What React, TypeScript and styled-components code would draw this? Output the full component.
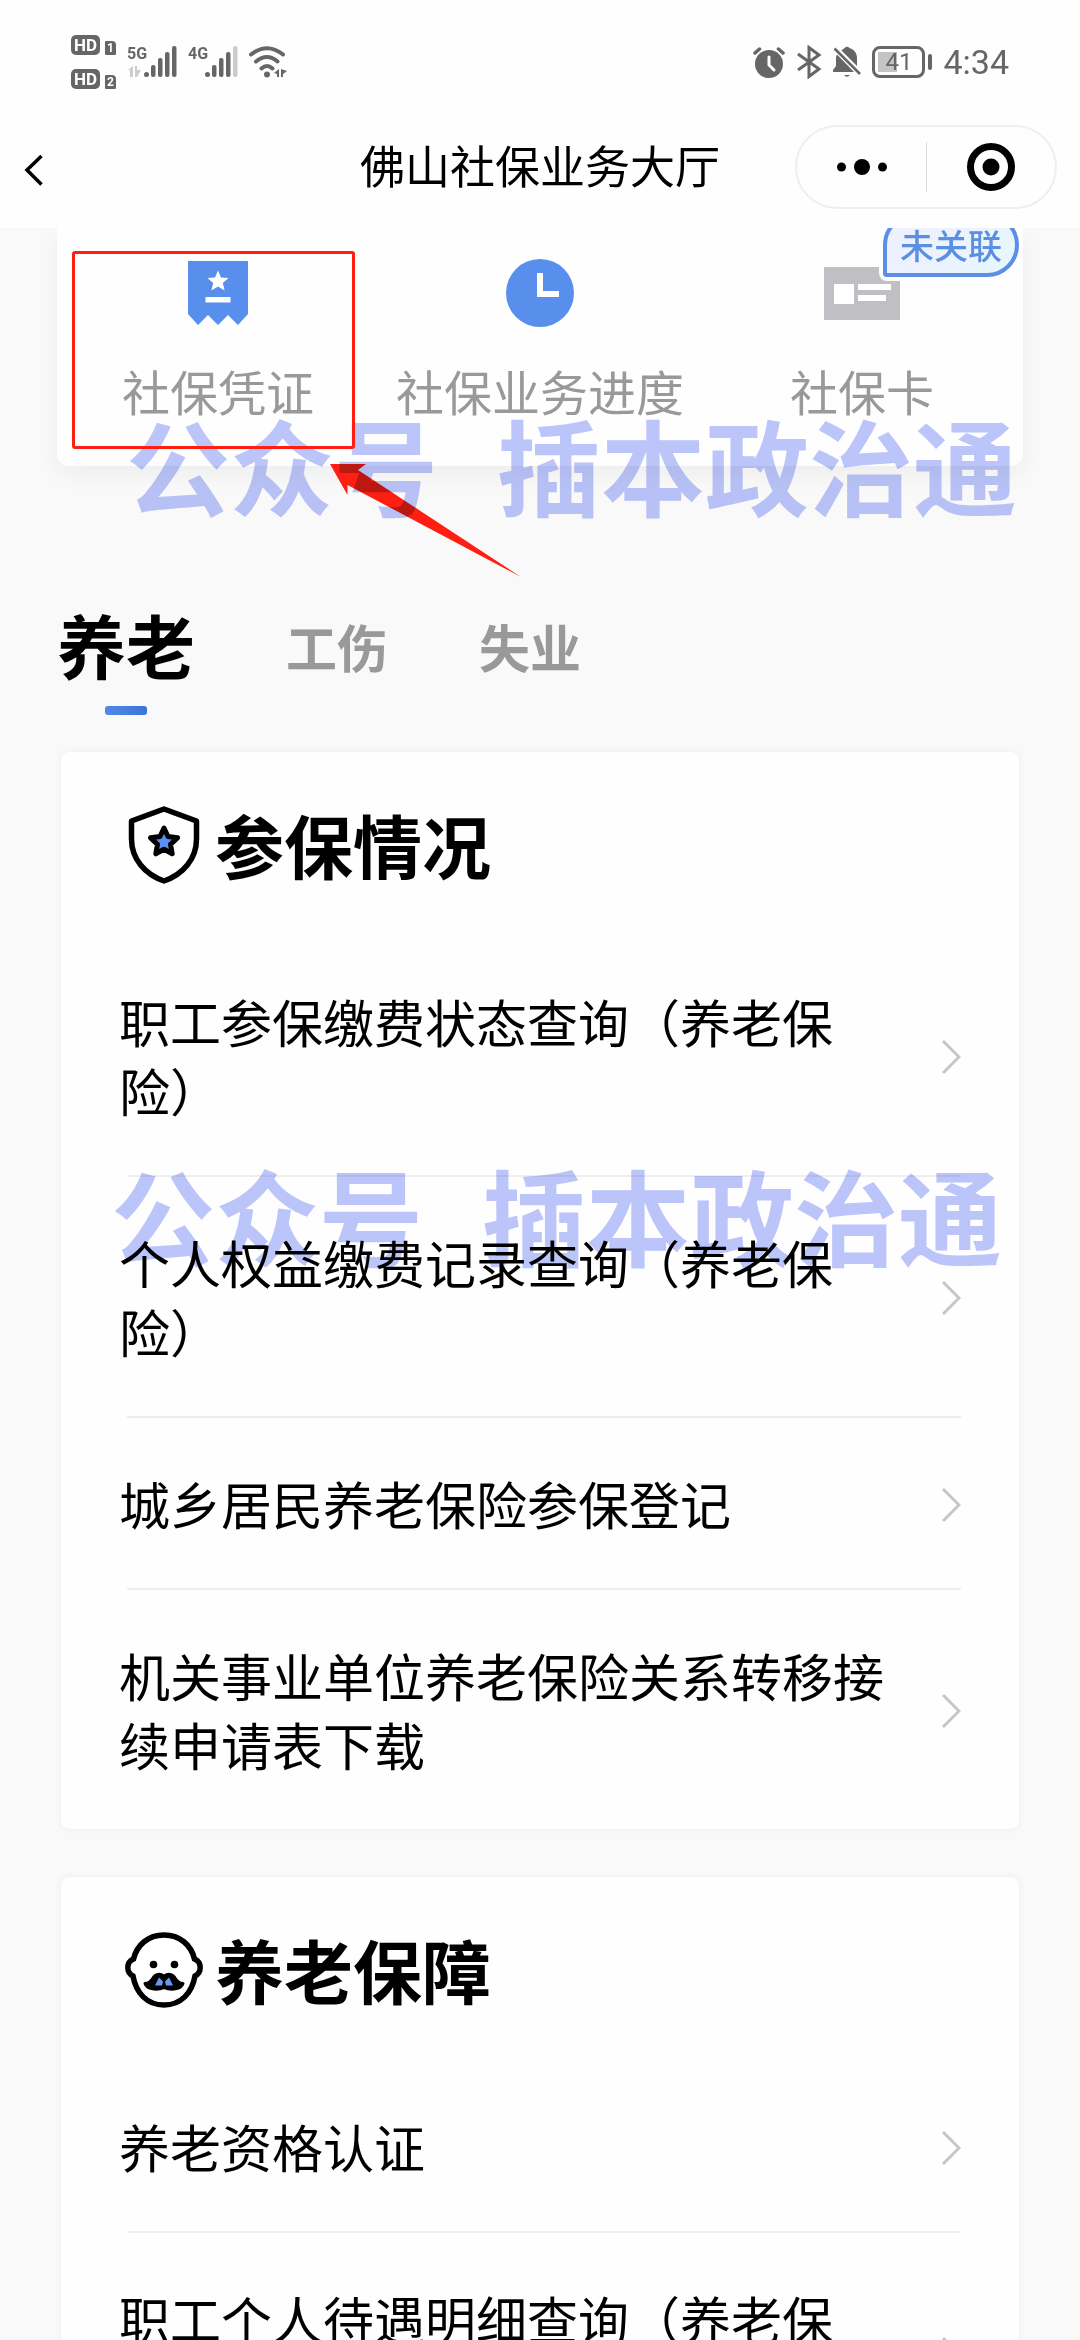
import React from "react";
import styled, { createGlobalStyle } from "styled-components";

const GlobalStyle = createGlobalStyle`
  * { box-sizing: border-box; }
  body {
    margin: 0;
    background: #f9f9f9;
    font-family: Roboto, "Noto Sans CJK SC", sans-serif;
    color: #000;
  }
  button {
    border: 0;
    padding: 0;
    background: none;
    font: inherit;
    color: inherit;
  }
  svg { display: block; flex: none; }
`;

const Screen = styled.div`
  position: relative;
  display: flex;
  flex-direction: column;
  height: 100vh;
  overflow: hidden;
`;

const Header = styled.header`
  flex: none;
  background: #fefefe;
`;

const StatusBar = styled.div`
  display: flex;
  align-items: center;
  justify-content: space-between;
  height: 106px;
  padding: 17px 71px 0;
  color: #666;
`;

const StatusGroup = styled.div<{ $gap: number }>`
  display: flex;
  align-items: center;
  gap: ${(p) => p.$gap}px;
`;

const SimList = styled.div`
  display: grid;
  gap: 14px;
`;

const SimBadge = styled.div`
  display: flex;
  align-items: flex-end;
  gap: 5px;
`;

const HdTag = styled.span`
  width: 29px;
  height: 20px;
  border-radius: 5px;
  background: #666;
  color: #fff;
  font-size: 17px;
  font-weight: 700;
  line-height: 20px;
  text-align: center;
`;

const SimNumber = styled.span`
  width: 11px;
  height: 14px;
  border-radius: 1px 4px 1px 1px;
  background: #666;
  color: #fff;
  font-size: 12px;
  font-weight: 700;
  line-height: 14px;
  text-align: center;
`;

const Signal = styled.div`
  display: flex;
  height: 32px;
`;

const SignalLabel = styled.span`
  width: 17px;
  font-size: 16px;
  font-weight: 700;
  line-height: 16px;
  white-space: nowrap;
`;

const Battery = styled.div`
  display: flex;
  align-items: center;
  gap: 3px;
  &::after {
    content: "";
    width: 4px;
    height: 16px;
    border-radius: 2px;
    background: #666;
  }
`;

const BatteryBody = styled.span`
  width: 53px;
  height: 32px;
  border: 3px solid #666;
  border-radius: 8px;
  padding: 3px;
  background: linear-gradient(#c4c4c4, #c4c4c4) 3px 3px / 19px 20px no-repeat;
  font-size: 24px;
  line-height: 20px;
  text-align: center;
`;

const Clock = styled.time`
  font-size: 34px;
  line-height: 32px;
`;

const NavBar = styled.div`
  display: grid;
  grid-template-columns: 1fr auto 1fr;
  align-items: center;
  height: 122px;
  padding: 0 23px;
`;

const BackButton = styled.button`
  justify-self: start;
  padding-top: 5px;
`;

const NavTitle = styled.h1`
  margin: 0;
  padding-top: 4px;
  font-size: 45px;
  font-weight: 400;
  line-height: 60px;
`;

const Capsule = styled.div`
  justify-self: end;
  display: grid;
  grid-template-columns: 1fr 1fr;
  align-items: center;
  width: 262px;
  height: 84px;
  border: 2px solid #efefef;
  border-radius: 42px;
`;

const CapsuleButton = styled.button`
  display: grid;
  place-items: center;
  height: 50px;
  & + & { border-left: 1px solid #ddd; }
`;

const Content = styled.main`
  flex: 1;
  min-height: 0;
  overflow: hidden;
  background: #f9f9f9;
`;

const QuickCard = styled.section`
  display: grid;
  grid-template-columns: repeat(3, 1fr);
  height: 238px;
  margin: 0 57px;
  border-radius: 0 0 12px 12px;
  background: #fefefe;
  box-shadow: 0 8px 24px rgba(0, 0, 0, 0.05);
`;

const QuickItem = styled.button`
  position: relative;
  display: flex;
  flex-direction: column;
  align-items: center;
  padding-top: 31px;
`;

const QuickIcon = styled.span`
  display: grid;
  place-items: center;
  height: 68px;
`;

const QuickLabel = styled.span`
  margin-top: 36px;
  font-size: 48px;
  line-height: 64px;
  color: #999;
  white-space: nowrap;
`;

const LinkBadge = styled.span`
  position: absolute;
  top: -15px;
  right: 4px;
  width: 136px;
  height: 64px;
  border: 4px solid #5b8fe6;
  border-radius: 32px 32px 32px 4px;
  background: linear-gradient(135deg, #f0effd, #e6f7fd);
  box-shadow: 0 0 0 4px #fefefe;
  color: #5b8fe0;
  font-size: 34px;
  font-weight: 500;
  line-height: 60px;
  text-align: center;
`;

const Tabs = styled.nav`
  display: flex;
  align-items: center;
  gap: 91px;
  height: 138px;
  margin: 112px 57px 36px;
`;

const Tab = styled.button<{ $active?: boolean }>`
  position: relative;
  height: 138px;
  padding-top: 7px;
  font-size: ${(p) => (p.$active ? 69 : 51)}px;
  font-weight: 700;
  line-height: 131px;
  color: ${(p) => (p.$active ? "#000" : "#999")};
  &::after {
    content: "";
    display: ${(p) => (p.$active ? "block" : "none")};
    position: absolute;
    bottom: 1px;
    left: calc(50% - 21px);
    width: 42px;
    height: 9px;
    border-radius: 3px;
    background: linear-gradient(90deg, #5289e6, #3b74d8);
  }
`;

const Card = styled.section`
  margin: 0 61px 48px;
  border-radius: 8px;
  background: #fefefe;
  box-shadow: 0 0 6px rgba(0, 0, 0, 0.06);
`;

const CardHeader = styled.header`
  display: flex;
  align-items: center;
  gap: 10px;
  height: 184px;
  padding: 14px 62px 0;
`;

const CardIcon = styled.span`
  display: grid;
  place-items: center;
  width: 82px;
  height: 80px;
  margin-bottom: 12px;
`;

const CardTitle = styled.h2`
  margin: 0;
  font-size: 69px;
  font-weight: 700;
  line-height: 96px;
`;

const RowList = styled.ul`
  margin: 0;
  padding: 0;
  list-style: none;
`;

const RowItem = styled.li`
  & + &::before {
    content: "";
    display: block;
    height: 2px;
    margin: 0 58px 0 66px;
    background: #eee;
  }
`;

const RowLink = styled.a`
  display: flex;
  align-items: center;
  justify-content: space-between;
  gap: 36px;
  padding: 49px 58px 46px;
  color: inherit;
  text-decoration: none;
`;

const RowText = styled.span`
  flex: 1;
  padding-top: 6px;
  font-size: 51px;
  line-height: 69px;
`;

const Watermark = styled.div<{ $top: number; $left: number }>`
  position: absolute;
  top: ${(p) => p.$top}px;
  left: ${(p) => p.$left}px;
  display: flex;
  gap: 59px;
  font-size: 104px;
  font-weight: 700;
  line-height: 120px;
  white-space: nowrap;
  color: #bcc6fb;
  mix-blend-mode: multiply;
  pointer-events: none;
`;

const Highlight = styled.div`
  position: absolute;
  top: 251px;
  left: 72px;
  width: 283px;
  height: 198px;
  border: 3px solid #ff1e12;
  border-radius: 3px;
  pointer-events: none;
`;

const Pointer = styled.svg`
  position: absolute;
  top: 464px;
  left: 330px;
  pointer-events: none;
`;

const SignalBars = ({ weak }: { weak?: boolean }) => (
  <svg width="33" height="32" viewBox="0 0 33 32" fill="#666">
    <circle cx="2.5" cy="28.5" r="2.5" />
    <rect x="7" y="19" width="4.5" height="12" rx="2" />
    <rect x="14" y="12" width="4.5" height="19" rx="2" />
    <rect x="21" y="6" width="4.5" height="25" rx="2" />
    <rect x="28" y="0" width="4.5" height="31" rx="2" fill={weak ? "#ccc" : "#666"} />
  </svg>
);

const DataArrows = styled.svg`
  position: absolute;
  left: 1px;
  bottom: 1px;
`;

const SignalWithData = styled(Signal)`
  position: relative;
`;

const WifiIcon = () => (
  <svg width="38" height="32" viewBox="0 0 38 32" fill="none" stroke="#666" strokeWidth="4" strokeLinecap="round">
    <path d="M2 8.5Q18 -4 34 8.5M7 15.500Q18 6.500 28.500 15.500M12.500 22.500Q18 17.500 23.500 22.500" />
    <circle cx="18" cy="28.500" r="3" fill="#666" stroke="none" />
    <path d="M25 27l5-4v8h-2v-3zM32 23v8h2v-3l4-3z" fill="#666" stroke="none" />
  </svg>
);

const AlarmIcon = () => (
  <svg width="32" height="32" viewBox="0 0 32 32" fill="none" stroke="#666" strokeWidth="3.500" strokeLinecap="round">
    <circle cx="16" cy="18" r="14" fill="#666" stroke="none" />
    <path d="M2 7l4.500-4M30 7l-4.500-4" />
    <path d="M16 11v8l5 5" stroke="#fff" strokeWidth="3" />
  </svg>
);

const BluetoothIcon = () => (
  <svg width="26" height="34" viewBox="0 0 26 34" fill="none" stroke="#666" strokeWidth="3">
    <path d="M2 9l21 15-10 7.500V2.500L23 10 2 25" />
  </svg>
);

const MuteIcon = () => (
  <svg width="28" height="32" viewBox="0 0 28 32" fill="#666">
    <path d="M4 8.500L21 26H0v-2l3-4v-9zM8.500 4.500C10 3 11 3 11.500 2q2.500-2.500 5 0c5 1.500 7.500 5.500 7.500 10v8z" />
    <path d="M1.500 2.500L27 28" stroke="#666" strokeWidth="2.500" />
    <path d="M11 29h6q-3 3.500-6 0z" />
  </svg>
);

const BackIcon = () => (
  <svg width="22" height="32" viewBox="0 0 22 32" fill="none" stroke="#000" strokeWidth="3.500">
    <path d="M18.500 2L4 16l14.500 14.500" />
  </svg>
);

const MoreIcon = () => (
  <svg width="50" height="16" viewBox="0 0 50 16">
    <circle cx="4.500" cy="8" r="4.500" />
    <circle cx="25" cy="8" r="8" />
    <circle cx="45.500" cy="8" r="4.500" />
  </svg>
);

const CloseIcon = () => (
  <svg width="48" height="48" viewBox="0 0 48 48">
    <circle cx="24" cy="24" r="20.500" fill="none" stroke="#000" strokeWidth="7" />
    <circle cx="24" cy="24" r="8.500" />
  </svg>
);

const VoucherIcon = () => (
  <svg width="60" height="64" viewBox="0 0 60 64">
    <path d="M0 0h60v53l-10 11-10-10-10 10-10-10-10 10L0 53z" fill="#588fec" />
    <path d="M30 9.500l3 7 7.500.6-5.700 5 1.800 7.400-6.600-4-6.600 4 1.800-7.400-5.700-5 7.500-.6z" fill="#fff" />
    <path d="M17.500 36h25v5.500h-25z" fill="#fff" />
  </svg>
);

const ProgressIcon = () => (
  <svg width="68" height="68" viewBox="0 0 68 68">
    <circle cx="34" cy="34" r="34" fill="#588fec" />
    <path d="M34 14v21h19" fill="none" stroke="#fff" strokeWidth="6" />
  </svg>
);

const SocialCardIcon = () => (
  <svg width="76" height="53" viewBox="0 0 76 53">
    <path d="M0 0h76v53H0z" fill="#bfbfc4" />
    <path d="M10 17h20v20H10zM34 17h33v6H34zM34 28h28v6H34z" fill="#fff" />
  </svg>
);

const ShieldIcon = () => (
  <svg width="72" height="78" viewBox="0 0 72 78" fill="none" stroke="#000" strokeWidth="5.500" strokeLinejoin="round">
    <path d="M36 3L68.500 15v18C68.500 53 55 68.500 36 75 17 68.500 3.500 53 3.500 33V15z" />
    <path d="M36 22l4 8.500 9.500 1.300-7 6.500 1.700 9.500L36 43.300l-8.200 4.500 1.700-9.500-7-6.500 9.500-1.300z" fill="#5b8ff0" strokeWidth="5" />
  </svg>
);

const ElderIcon = () => (
  <svg width="78" height="76" viewBox="0 0 78 76">
    <path
      d="M39 3C23 3 12 13 8.500 27 5 28.500 2.800 31.500 2.800 35.500S5 42.500 8 44C11 61 22 73 39 73s28-12 31-29c3-1.500 5.200-4.500 5.200-8.500s-2.200-7-5.700-8.500C66 13 55 3 39 3z"
      fill="#fff"
      stroke="#000"
      strokeWidth="5.500"
    />
    <circle cx="28.500" cy="32.500" r="3.800" />
    <circle cx="49.500" cy="32.500" r="3.800" />
    <path
      d="M39 44.500c3-3.500 9-2.500 11 1.500 2 3.500 4.500 5.500 8 5.500-2 6-12 7-19 4-7 3-17 2-19-4 3.500 0 6-2 8-5.500 2-4 8-5 11-1.500z"
      stroke="#000"
      strokeWidth="3"
      strokeLinejoin="round"
    />
    <path d="M34 45.500l4 4-1 4h-7zM44 45.500l-4 4 1 4h7z" fill="#6a97f5" />
  </svg>
);

const ChevronIcon = () => (
  <svg width="20" height="34" viewBox="0 0 20 34" fill="none" stroke="#c6c6c6" strokeWidth="3">
    <path d="M2 1l16 16L2 33" />
  </svg>
);

const quickItems = [
  { label: "社保凭证", icon: <VoucherIcon /> },
  { label: "社保业务进度", icon: <ProgressIcon /> },
  { label: "社保卡", icon: <SocialCardIcon />, badge: "未关联" },
];

const tabs = ["养老", "工伤", "失业"];

const sections = [
  {
    title: "参保情况",
    icon: <ShieldIcon />,
    rows: [
      "职工参保缴费状态查询（养老保险）",
      "个人权益缴费记录查询（养老保险）",
      "城乡居民养老保险参保登记",
      "机关事业单位养老保险关系转移接续申请表下载",
    ],
  },
  {
    title: "养老保障",
    icon: <ElderIcon />,
    rows: ["养老资格认证", "职工个人待遇明细查询（养老保险）"],
  },
];

const watermarks = [
  { top: 414, left: 126 },
  { top: 1164, left: 111 },
];

export default function App() {
  return (
    <>
      <GlobalStyle />
      <Screen>
        <Header>
          <StatusBar>
            <StatusGroup $gap={11}>
              <SimList>
                {["1", "2"].map((n) => (
                  <SimBadge key={n}>
                    <HdTag>HD</HdTag>
                    <SimNumber>{n}</SimNumber>
                  </SimBadge>
                ))}
              </SimList>
              <SignalWithData>
                <SignalLabel>5G</SignalLabel>
                <SignalBars />
                <DataArrows width="13" height="11" viewBox="0 0 13 11" fill="#ccc">
                  <path d="M0 4l5-4v11H2V4zM7 0h2v4l4 0-4 7H7z" />
                </DataArrows>
              </SignalWithData>
              <Signal>
                <SignalLabel>4G</SignalLabel>
                <SignalBars weak />
              </Signal>
              <WifiIcon />
            </StatusGroup>
            <StatusGroup $gap={11}>
              <AlarmIcon />
              <BluetoothIcon />
              <MuteIcon />
              <Battery>
                <BatteryBody>41</BatteryBody>
              </Battery>
              <Clock>4:34</Clock>
            </StatusGroup>
          </StatusBar>
          <NavBar>
            <BackButton aria-label="返回">
              <BackIcon />
            </BackButton>
            <NavTitle>佛山社保业务大厅</NavTitle>
            <Capsule>
              <CapsuleButton aria-label="更多">
                <MoreIcon />
              </CapsuleButton>
              <CapsuleButton aria-label="关闭">
                <CloseIcon />
              </CapsuleButton>
            </Capsule>
          </NavBar>
        </Header>
        <Content>
          <QuickCard>
            {quickItems.map((item) => (
              <QuickItem key={item.label}>
                <QuickIcon>{item.icon}</QuickIcon>
                <QuickLabel>{item.label}</QuickLabel>
                {item.badge && <LinkBadge>{item.badge}</LinkBadge>}
              </QuickItem>
            ))}
          </QuickCard>
          <Tabs>
            {tabs.map((name, i) => (
              <Tab key={name} $active={i === 0}>
                {name}
              </Tab>
            ))}
          </Tabs>
          {sections.map((section) => (
            <Card key={section.title}>
              <CardHeader>
                <CardIcon>{section.icon}</CardIcon>
                <CardTitle>{section.title}</CardTitle>
              </CardHeader>
              <RowList>
                {section.rows.map((row) => (
                  <RowItem key={row}>
                    <RowLink href="#">
                      <RowText>{row}</RowText>
                      <ChevronIcon />
                    </RowLink>
                  </RowItem>
                ))}
              </RowList>
            </Card>
          ))}
        </Content>
        <Pointer width="192" height="114" viewBox="0 0 192 114">
          <path d="M0 0h36l-8 6 163 107L17.500 21v10z" fill="#ff1e12" />
        </Pointer>
        {watermarks.map((mark) => (
          <Watermark key={mark.top} $top={mark.top} $left={mark.left}>
            <span>公众号</span>
            <span>插本政治通</span>
          </Watermark>
        ))}
        <Highlight />
      </Screen>
    </>
  );
}
